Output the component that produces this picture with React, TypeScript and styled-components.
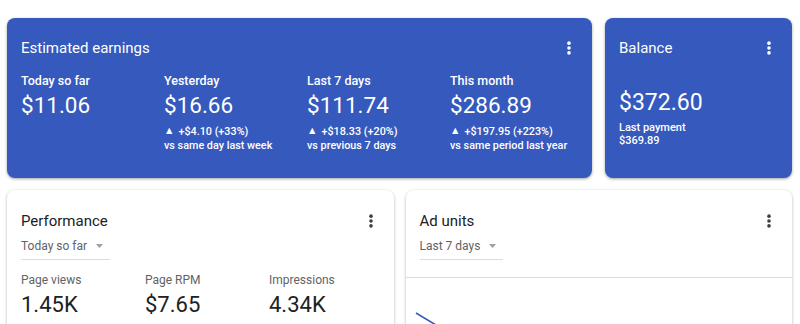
import { FC } from "react";
import styled, { createGlobalStyle } from "styled-components";

const GlobalStyle = createGlobalStyle`
  html, body {
    margin: 0;
    background: #ffffff;
    overflow: hidden;
  }
  body {
    font-family: Roboto, "Liberation Sans", Arial, sans-serif;
    -webkit-font-smoothing: antialiased;
  }
  * {
    box-sizing: border-box;
  }
`;

const Dashboard = styled.main`
  padding: 18px 8px 0 7px;
  display: grid;
  grid-template-columns: minmax(0, 1fr);
  row-gap: 12px;
`;

const TopRow = styled.div`
  display: grid;
  grid-template-columns: minmax(0, 1fr) 187px;
  gap: 13px;
`;

const BottomRow = styled.div`
  display: grid;
  grid-template-columns: minmax(0, 1fr) minmax(0, 1fr);
  gap: 12px;
`;

const BlueCard = styled.section`
  height: 160px;
  padding: 18px 14px;
  background: #3559bc;
  color: #ffffff;
  border-radius: 8px;
  box-shadow: 0 1px 2px rgba(60, 64, 67, 0.3), 0 1px 3px 1px rgba(60, 64, 67, 0.15);
`;

const WhiteCard = styled.section`
  height: 160px;
  background: #ffffff;
  border-radius: 8px;
  overflow: hidden;
  box-shadow: 0 1px 2px rgba(60, 64, 67, 0.25), 0 1px 3px 1px rgba(60, 64, 67, 0.12);
`;

const CardTop = styled.div`
  padding: 19px 14px 0;
`;

const CardHead = styled.header`
  display: flex;
  align-items: center;
  justify-content: space-between;
  height: 24px;
`;

const CardTitle = styled.h2<{ $light?: boolean }>`
  margin: 0;
  font-size: 15px;
  line-height: 24px;
  font-weight: 400;
  color: ${(p) => (p.$light ? "#ffffff" : "#202124")};
`;

const KebabButton = styled.button<{ $light?: boolean }>`
  display: flex;
  padding: 0;
  border: 0;
  background: none;
  color: ${(p) => (p.$light ? "#ffffff" : "#3c4043")};
  & svg {
    width: 18px;
    height: 18px;
    fill: currentColor;
  }
`;

const Kebab: FC<{ light?: boolean }> = ({ light }) => (
  <KebabButton $light={light}>
    <svg viewBox="0 0 24 24">
      <circle cx="12" cy="5.5" r="2.4" />
      <circle cx="12" cy="12" r="2.4" />
      <circle cx="12" cy="18.5" r="2.4" />
    </svg>
  </KebabButton>
);

const MetricGrid = styled.div`
  display: grid;
  grid-template-columns: repeat(3, 143px) minmax(0, 1fr);
  margin-top: 13px;
`;

const MetricLabel = styled.div`
  font-size: 12.5px;
  line-height: 16px;
  font-weight: 500;
`;

const MetricValue = styled.div`
  margin-top: 2px;
  font-size: 22.5px;
  line-height: 28px;
  font-weight: 400;
`;

const Delta = styled.div`
  margin-top: 5px;
  font-size: 10.8px;
  line-height: 14px;
  font-weight: 500;
  white-space: nowrap;
`;

const Arrow = styled.span`
  display: inline-block;
  font-size: 10.5px;
  margin-right: 4px;
  vertical-align: 0.5px;
`;

const BalanceValue = styled.div`
  margin-top: 29px;
  font-size: 23px;
  line-height: 28px;
`;

const BalanceNote = styled.div`
  margin-top: 4px;
  font-size: 11px;
  line-height: 13px;
  font-weight: 500;
`;

const Dropdown = styled.button`
  display: inline-flex;
  align-items: center;
  gap: 9px;
  margin-top: 4px;
  padding: 0 7px 4px 0;
  border: 0;
  border-bottom: 1px solid #dadce0;
  background: none;
  font-family: inherit;
  font-size: 12px;
  line-height: 18px;
  color: #5f6368;
  & svg {
    width: 7px;
    height: 4px;
    fill: #9aa0a6;
  }
`;

const StatGrid = styled.div`
  display: grid;
  grid-template-columns: repeat(3, 124px);
  margin-top: 12px;
`;

const StatLabel = styled.div`
  font-size: 12px;
  line-height: 16px;
  color: #5f6368;
`;

const StatValue = styled.div`
  margin-top: 3px;
  font-size: 22px;
  line-height: 28px;
  color: #202124;
`;

const Divider = styled.hr`
  margin: 17px 0 0;
  border: 0;
  border-top: 1px solid #dadce0;
`;

const Chart = styled.svg`
  display: block;
  width: 100%;
  height: 60px;
`;

interface EarningI {
  label: string;
  value: string;
  change?: string;
  compare?: string;
}

const earnings: EarningI[] = [
  { label: "Today so far", value: "$11.06" },
  { label: "Yesterday", value: "$16.66", change: "+$4.10 (+33%)", compare: "vs same day last week" },
  { label: "Last 7 days", value: "$111.74", change: "+$18.33 (+20%)", compare: "vs previous 7 days" },
  { label: "This month", value: "$286.89", change: "+$197.95 (+223%)", compare: "vs same period last year" },
];

const stats = [
  { label: "Page views", value: "1.45K" },
  { label: "Page RPM", value: "$7.65" },
  { label: "Impressions", value: "4.34K" },
];

const Caret = () => (
  <svg viewBox="0 0 7 4">
    <path d="M0 0h7L3.5 4z" />
  </svg>
);

const App: FC = () => {
  return (
    <>
      <GlobalStyle />
      <Dashboard>
        <TopRow>
          <BlueCard>
            <CardHead>
              <CardTitle $light>Estimated earnings</CardTitle>
              <Kebab light />
            </CardHead>
            <MetricGrid>
              {earnings.map((e) => (
                <div key={e.label}>
                  <MetricLabel>{e.label}</MetricLabel>
                  <MetricValue>{e.value}</MetricValue>
                  {e.change && (
                    <Delta>
                      <Arrow>▲</Arrow>
                      {e.change}
                      <br />
                      {e.compare}
                    </Delta>
                  )}
                </div>
              ))}
            </MetricGrid>
          </BlueCard>
          <BlueCard>
            <CardHead>
              <CardTitle $light>Balance</CardTitle>
              <Kebab light />
            </CardHead>
            <BalanceValue>$372.60</BalanceValue>
            <BalanceNote>
              Last payment
              <br />
              $369.89
            </BalanceNote>
          </BlueCard>
        </TopRow>
        <BottomRow>
          <WhiteCard>
            <CardTop>
              <CardHead>
                <CardTitle>Performance</CardTitle>
                <Kebab />
              </CardHead>
              <Dropdown>
                Today so far
                <Caret />
              </Dropdown>
              <StatGrid>
                {stats.map((s) => (
                  <div key={s.label}>
                    <StatLabel>{s.label}</StatLabel>
                    <StatValue>{s.value}</StatValue>
                  </div>
                ))}
              </StatGrid>
            </CardTop>
          </WhiteCard>
          <WhiteCard>
            <CardTop>
              <CardHead>
                <CardTitle>Ad units</CardTitle>
                <Kebab />
              </CardHead>
              <Dropdown>
                Last 7 days
                <Caret />
              </Dropdown>
            </CardTop>
            <Divider />
            <Chart viewBox="0 0 387 60" preserveAspectRatio="none">
              <polyline points="10,35 30,47 60,60" fill="none" stroke="#3b5fc4" strokeWidth="1.6" />
            </Chart>
          </WhiteCard>
        </BottomRow>
      </Dashboard>
    </>
  );
};

export default App;
